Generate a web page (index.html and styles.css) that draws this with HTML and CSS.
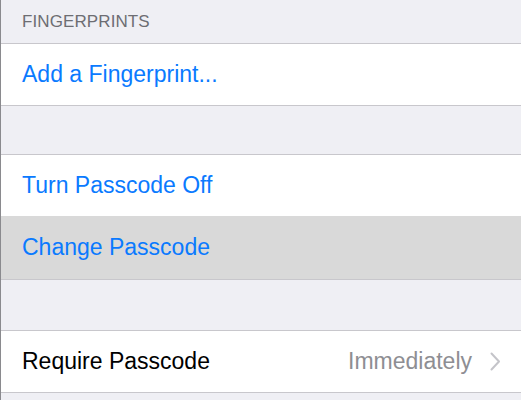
FILE: index.html
```html
<!DOCTYPE html>
<html>
<head>
<meta charset="utf-8">
<link rel="stylesheet" href="styles.css">
</head>
<body>
<div class="screen">
  <div class="header">FINGERPRINTS</div>
  <div class="group">
    <div class="row"><span class="link">Add a Fingerprint...</span></div>
  </div>
  <div class="spacer"></div>
  <div class="group">
    <div class="row"><span class="link">Turn Passcode Off</span></div>
    <div class="row selected"><span class="link">Change Passcode</span></div>
  </div>
  <div class="spacer second"></div>
  <div class="group">
    <div class="row">
      <span class="label">Require Passcode</span>
      <span class="value">Immediately</span>
      <svg class="chevron" width="11" height="19" viewBox="0 0 11 19"><path d="M1.5 1.5 L9 9.5 L1.5 17.5" fill="none" stroke="#c4c4c9" stroke-width="2" stroke-linecap="round" stroke-linejoin="round"/></svg>
    </div>
  </div>
</div>
</body>
</html>
```
FILE: styles.css
```css
html, body {
  margin: 0;
  padding: 0;
  background: #efeff4;
}
.screen {
  width: 521px;
  height: 400px;
  overflow: hidden;
  background: #efeff4;
  border-left: 1px solid #8a8a8e;
  box-sizing: border-box;
  font-family: "Liberation Sans", Arial, sans-serif;
}
.header {
  height: 43px;
  box-sizing: border-box;
  padding: 12px 0 0 21px;
  font-size: 17px;
  color: #6d6d72;
  letter-spacing: 0.1px;
}
.group {
  background: #fff;
  border-top: 1px solid #c8c7cc;
  border-bottom: 1px solid #c8c7cc;
}
.spacer {
  height: 48px;
}
.spacer.second {
  height: 50px;
}
.row {
  height: 61px;
  display: flex;
  align-items: center;
  padding: 0 20px 0 21px;
  font-size: 23px;
}
.row + .row {
  height: 63px;
}
.row.selected {
  background: #d9d9d9;
}
.link {
  color: #0a7aff;
}
.label {
  color: #000;
  flex: 1;
}
.value {
  color: #8e8e93;
  margin-right: 18px;
}
.chevron {
  display: block;
}
```
